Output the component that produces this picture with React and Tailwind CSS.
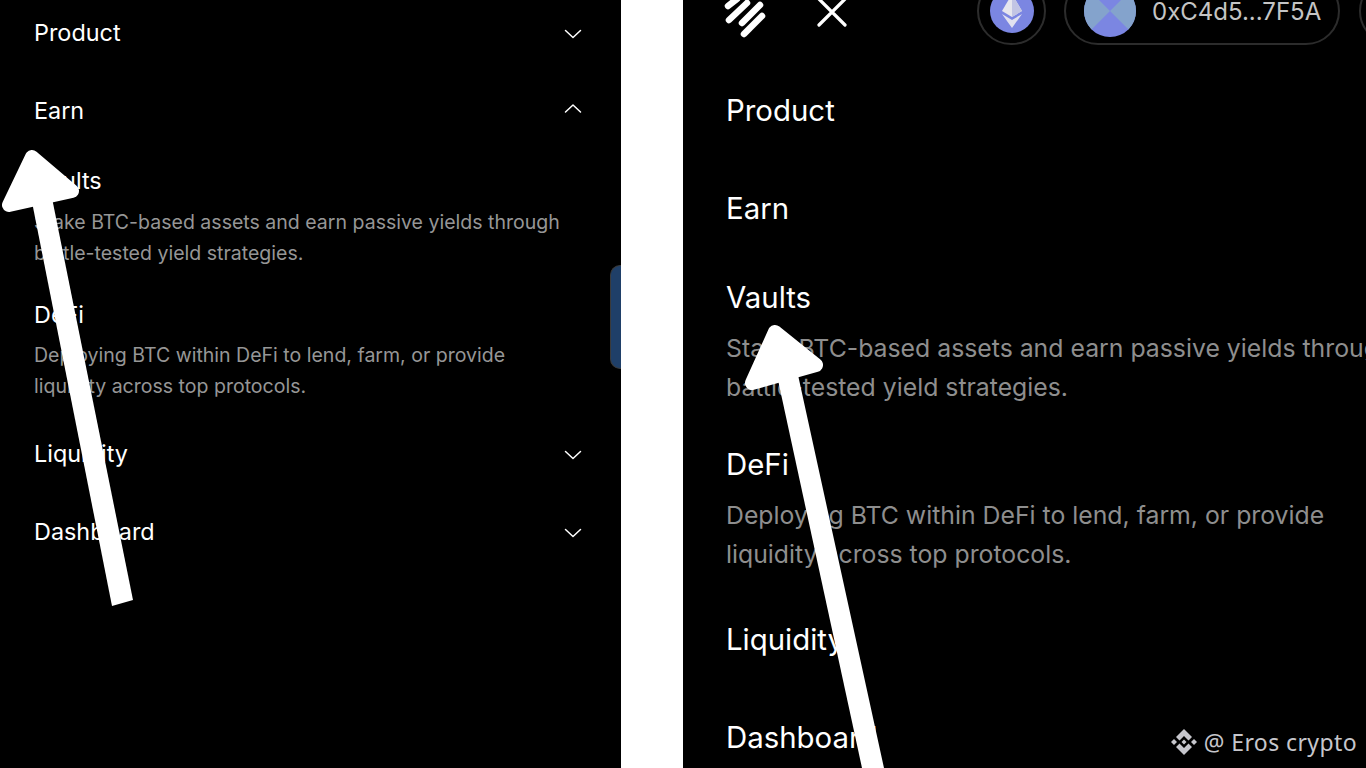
function Chevron({ up }) {
  return (
    <svg width="18" height="10" viewBox="0 0 18 10" fill="none" className={up ? "rotate-180 -translate-y-[2.500px]" : "translate-y-[1px]"}>
      <path d="M1.5 1.5 9 8.500l7.500-7" stroke="#ffffff" strokeWidth="1.5" strokeLinecap="round" strokeLinejoin="round" />
    </svg>
  );
}

// white annotation arrow drawn on top of the menu
function Arrow({ className, head, shaft, w, h }) {
  return (
    <svg className={className} width={w} height={h} viewBox={`0 0 ${w} ${h}`}>
      <polygon points={head} fill="#fff" stroke="#fff" strokeWidth="14" strokeLinejoin="round" />
      <polygon points={shaft} fill="#fff" />
    </svg>
  );
}

function LeftRow({ label, up, className }) {
  return (
    <div className={`flex items-center justify-between text-white text-[23.400px] leading-none ${className}`}>
      <span>{label}</span>
      <span className="flex"><Chevron up={up} /></span>
    </div>
  );
}

function LeftMenu() {
  return (
    <div className="relative w-[621px] shrink-0 bg-black pl-[34px] pr-[39px] pt-[21px]">
      <LeftRow label="Product" className="h-[24px]" />
      <LeftRow label="Earn" up className="h-[24px] mt-[54px]" />
      <p className="mt-[46px] text-white text-[23.400px] leading-[24px]">Vaults</p>
      <p className="mt-[14px] text-[#969696] text-[19.550px] leading-[31px] whitespace-nowrap">
        Stake BTC-based assets and earn passive yields through
        <br />
        battle-tested yield strategies.
      </p>
      <p className="mt-[34px] text-white text-[23.400px] leading-[24px]">DeFi</p>
      <p className="mt-[13px] text-[#969696] text-[19.550px] leading-[31px] whitespace-nowrap">
        Deploying BTC within DeFi to lend, farm, or provide
        <br />
        liquidity across top protocols.
      </p>
      <LeftRow label="Liquidity" className="h-[24px] mt-[40px]" />
      <LeftRow label="Dashboard" className="h-[24px] mt-[54px]" />

      <div className="absolute right-0 top-[265px] h-[104px] w-[11px] rounded-l-[10px] border border-r-0 border-[#3a3a3a] bg-[#1f3f68]" />
      <Arrow
        className="absolute left-0 top-[140px]"
        w={140}
        h={470}
        head="32,17 9,65 72,51"
        shaft="32,62 52,58 133,460 112,466"
      />
    </div>
  );
}

function RightMenu() {
  return (
    <div className="relative flex-1 overflow-hidden bg-black pl-[43px]">
      {/* header, scrolled partly off the top */}
      <div className="-mt-[23px] flex h-[68px] items-center">
        <svg width="44" height="68" viewBox="0 0 44 68" fill="none" className="-ml-[4px] shrink-0">
          <g stroke="#fff" strokeWidth="6.5" strokeLinecap="round">
            <path d="M6 29 15 22" />
            <path d="M7 43 25 26" />
            <path d="M20 46 38 28" />
            <path d="M22 57 40 39" />
          </g>
        </svg>
        <svg width="30" height="30" viewBox="0 0 30 30" fill="none" className="ml-[51px] mt-[1px] shrink-0">
          <path d="M2 2 28 28M28 2 2 28" stroke="#fff" strokeWidth="3.2" strokeLinecap="round" />
        </svg>
        <div className="ml-[130px] flex h-[68px] w-[69px] shrink-0 items-center justify-center rounded-full border-2 border-[#2c2c2c]">
          <svg width="44" height="44" viewBox="0 0 44 44">
            <circle cx="22" cy="22" r="22" fill="#7b86e2" />
            <path d="M22 5 12 22l10 6 10-6z" fill="#e6e6ee" />
            <path d="M22 5v23l10-6z" fill="#c2c5e4" />
            <path d="M12 25l10 14 10-14-10 6z" fill="#e0e1f0" />
          </svg>
        </div>
        <div className="ml-[18px] flex h-[68px] w-[276px] shrink-0 items-center rounded-full border-2 border-[#2c2c2c] pl-[18px]">
          <svg width="52" height="52" viewBox="0 0 52 52" className="shrink-0">
            <defs>
              <clipPath id="avatar-clip"><circle cx="26" cy="26" r="26" /></clipPath>
            </defs>
            <g clipPath="url(#avatar-clip)">
              <rect width="52" height="52" fill="#7b86e2" />
              <path d="M0 0 26 26 0 52zM52 0 26 26 52 52z" fill="#84a3cc" />
            </g>
          </svg>
          <span className="ml-[16px] mt-[2px] text-[24px] leading-none text-[#c4c4c4]">0xC4d5...7F5A</span>
        </div>
        <div className="ml-[19px] h-[68px] w-[68px] shrink-0 rounded-full border-2 border-[#2c2c2c]" />
      </div>

      <div className="whitespace-nowrap">
        <p className="mt-[51px] text-white text-[29.400px] leading-[30px]">Product</p>
        <p className="mt-[68px] text-white text-[29.400px] leading-[30px]">Earn</p>
        <p className="mt-[59px] text-white text-[29.400px] leading-[30px]">Vaults</p>
        <p className="mt-[16px] text-[#8e8e8e] text-[24.800px] leading-[39px]">
          Stake BTC-based assets and earn passive yields through
          <br />
          battle-tested yield strategies.
        </p>
        <p className="mt-[43px] text-white text-[29.400px] leading-[30px]">DeFi</p>
        <p className="mt-[16px] text-[#8e8e8e] text-[24.800px] leading-[39px]">
          Deploying BTC within DeFi to lend, farm, or provide
          <br />
          liquidity across top protocols.
        </p>
        <p className="mt-[51px] text-white text-[29.400px] leading-[30px]">Liquidity</p>
        <p className="mt-[68px] text-white text-[29.400px] leading-[30px]">Dashboard</p>
      </div>

      <Arrow
        className="absolute left-[50px] top-[315px]"
        w={160}
        h={453}
        head="42,17 19,68 83,50"
        shaft="45,65 65,60 151,453 129,453"
      />

      {/* watermark */}
      <div className="absolute bottom-[9px] right-[9px] flex items-center gap-[6px] bg-black pl-[4px] font-['Noto_Sans',sans-serif] text-[23px] leading-[34px] text-[#c6c6cc] tracking-[0.4px]">
        <svg width="28" height="28" viewBox="0 0 28 28" fill="#c6c6cc">
          <path d="M14 1 22 9 18.500 12.500 14 8 9.500 12.500 6 9z" />
          <path d="M14 27 6 19 9.500 15.500 14 20 18.500 15.500 22 19z" />
          <path d="M4 11 7 14 4 17 1 14z" />
          <path d="M24 11 27 14 24 17 21 14z" />
          <path d="M14 11.500 16.500 14 14 16.500 11.500 14z" />
        </svg>
        <span>@ Eros crypto</span>
      </div>
    </div>
  );
}

export default function App() {
  return (
    <div className="flex h-screen w-full overflow-hidden bg-white font-['Inter',sans-serif]">
      <LeftMenu />
      <div className="w-[62px] shrink-0 bg-white" />
      <RightMenu />
    </div>
  );
}
